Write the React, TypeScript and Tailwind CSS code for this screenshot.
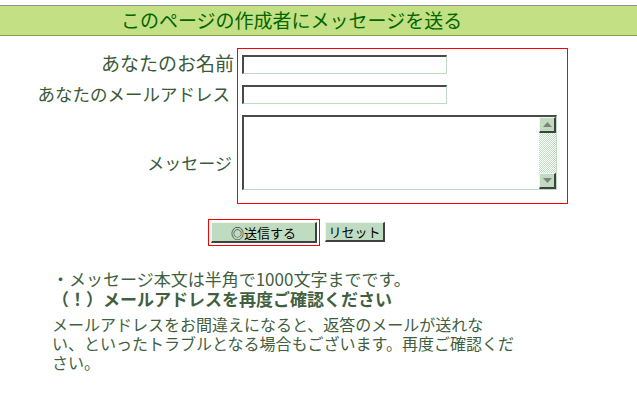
export default function App() {
  const inputCls =
    "block w-[205px] h-[19px] bg-white border-t-2 border-l-2 border-t-[#4a4a4a] border-l-[#4a4a4a] border-b border-r border-b-[#c0dcc0] border-r-[#c0dcc0] outline-none px-1 text-[13px]";

  return (
    <div className="w-[637px] h-[395px] bg-white pt-[5px] text-[#3f5f3f] font-['Noto_Sans_CJK_JP',sans-serif]">
      {/* Title bar */}
      <div className="h-[31px] bg-[#c4e084] border-t border-t-[#909090] border-b border-b-[#8aa048] pl-[121px] text-[19px] leading-[28px] text-[#006600]">
        このページの作成者にメッセージを送る
      </div>

      {/* Form */}
      <div className="flex mt-[12px]">
        <div className="w-[237px] flex flex-col items-end text-[#3a5a3a]">
          <div className="h-[31px] flex items-center pr-[3px] text-[19px]">あなたのお名前</div>
          <div className="h-[30px] flex items-center pr-[7px] text-[17.5px]">あなたのメールアドレス</div>
          <div className="h-[95px] flex items-center pt-[13px] pr-[5px] text-[17px]">メッセージ</div>
        </div>

        <div className="w-[331px] h-[156px] border border-[#ff0000] pt-[6px] pl-[4px] flex flex-col gap-[11px]">
          <input type="text" className={inputCls} />
          <input type="text" className={inputCls} />
          <div className="w-[315px] h-[75px] flex bg-white border-t-2 border-l-2 border-t-[#4a4a4a] border-l-[#4a4a4a] border-b border-r border-b-[#c0dcc0] border-r-[#c0dcc0]">
            <textarea className="flex-1 resize-none outline-none bg-white text-[13px] overflow-hidden" />
            <div className="w-[17px] flex flex-col bg-[repeating-conic-gradient(#c0dcc0_0_25%,#ffffff_0_50%)] bg-[length:2px_2px]">
              <div className="h-[16px] flex items-center justify-center bg-[#c0dcc0] border-t border-l border-[#eef7ee] border-r-2 border-b-2 border-r-[#404040] border-b-[#404040]">
                <svg width="9" height="5" viewBox="0 0 9 5">
                  <polygon points="4.5,0 9,5 0,5" fill="#808080" />
                </svg>
              </div>
              <div className="flex-1" />
              <div className="h-[16px] flex items-center justify-center bg-[#c0dcc0] border-t border-l border-[#eef7ee] border-r-2 border-b-2 border-r-[#404040] border-b-[#404040]">
                <svg width="9" height="5" viewBox="0 0 9 5">
                  <polygon points="0,0 9,0 4.5,5" fill="#808080" />
                </svg>
              </div>
            </div>
          </div>
        </div>
      </div>

      {/* Buttons */}
      <div className="flex items-start mt-[15px] ml-[208px]">
        <div className="border border-[#ff0000] p-[2px]">
          <button className="block w-[106px] h-[21px] bg-[#c0dcc0] border-t border-l border-[#eef7ee] border-r-2 border-b-2 border-r-[#404040] border-b-[#404040] text-[13px] leading-[17px] text-black">
            ◎送信する
          </button>
        </div>
        <button className="ml-[5px] mt-[3px] w-[60px] h-[20px] bg-[#c0dcc0] border-t border-l border-[#eef7ee] border-r-2 border-b-2 border-r-[#404040] border-b-[#404040] text-[13px] leading-[16px] text-black">
          リセット
        </button>
      </div>

      {/* Notes */}
      <div className="ml-[52px] mt-[23px] w-[500px] [font-feature-settings:'halt'_0,'chws'_0]">
        <p className="text-[17px] leading-[20px]">・メッセージ本文は半角で1000文字までです。</p>
        <p className="text-[17px] leading-[20px] font-bold">（！）メールアドレスを再度ご確認ください</p>
        <p className="mt-[6px] text-[16px] leading-[19px]">
          メールアドレスをお間違えになると、返答のメールが送れな
          <br />
          い、といったトラブルとなる場合もございます。再度ご確認くだ
          <br />
          さい。
        </p>
      </div>
    </div>
  );
}
